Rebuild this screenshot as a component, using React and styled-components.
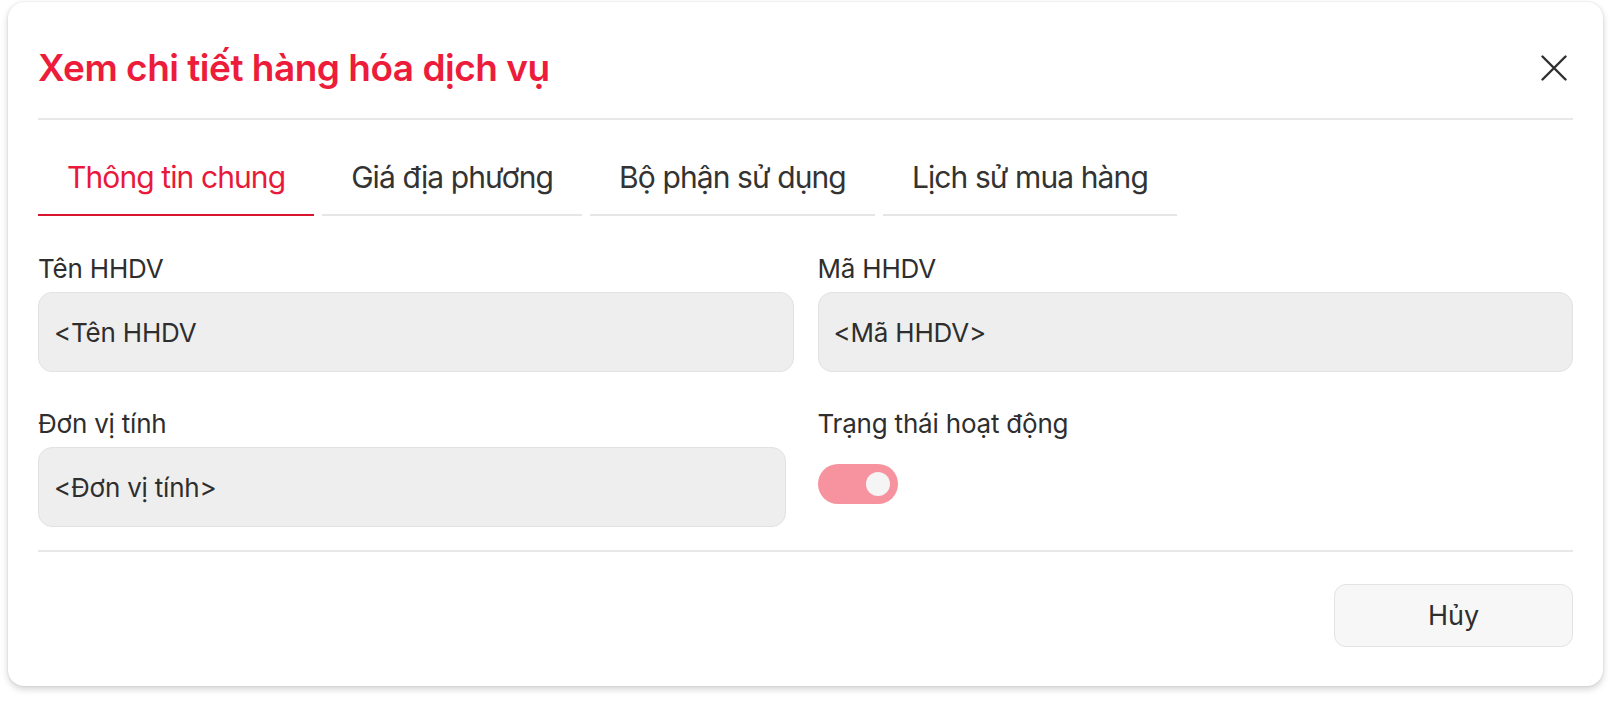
import React, { useState } from "react";
import styled, { createGlobalStyle } from "styled-components";

const GlobalStyle = createGlobalStyle`
  html, body {
    margin: 0;
    padding: 0;
    background: #ffffff;
  }
  body {
    font-family: Inter, "Noto Sans", "Liberation Sans", sans-serif;
    color: #333333;
  }
  * { box-sizing: border-box; }
`;

const Page = styled.div`
  padding: 2px 9px 16px 8px;
`;

const Card = styled.div`
  background: #ffffff;
  border-radius: 16px;
  box-shadow: 0 3px 7px rgba(0, 0, 0, 0.18), 0 0 2px rgba(0, 0, 0, 0.12);
  padding: 0 30px 39px;
  height: 684px;
  display: flex;
  flex-direction: column;
`;

const Header = styled.div`
  display: flex;
  align-items: center;
  justify-content: space-between;
  padding: 44px 0 28px;
  border-bottom: 2px solid #e8e8e8;
`;

const Title = styled.h1`
  margin: 0;
  font-size: 37px;
  line-height: 44px;
  font-weight: 600;
  color: #ec1c3a;
  letter-spacing: -0.5px;
`;

const CloseButton = styled.button`
  width: 38px;
  height: 38px;
  display: flex;
  align-items: center;
  justify-content: center;
  border: none;
  background: transparent;
  padding: 0;
  cursor: pointer;
  color: #2f2f2f;
`;

const TabBar = styled.div`
  display: flex;
  gap: 8px;
  margin-top: 20px;
`;

const Tab = styled.button`
  border: none;
  background: transparent;
  padding: 19px 29px;
  font-family: inherit;
  font-size: 30px;
  line-height: 36px;
  font-weight: 400;
  letter-spacing: -0.9px;
  color: ${(p) => (p.$active ? "#e8193a" : "#333333")};
  border-bottom: 2px solid ${(p) => (p.$active ? "#d9162f" : "#e6e6e6")};
  cursor: pointer;
  white-space: nowrap;
`;

const Form = styled.div`
  display: grid;
  grid-template-columns: 1fr 1fr;
  column-gap: 24px;
  row-gap: 37px;
  margin-top: 38px;
`;

const Field = styled.div`
  display: flex;
  flex-direction: column;
  gap: 8px;
  margin-right: ${(p) => (p.$inset ? "8px" : "0")};
`;

const Label = styled.label`
  font-size: 26px;
  line-height: 30px;
  letter-spacing: -0.2px;
  color: #2e2e2e;
`;

const Input = styled.div`
  height: 80px;
  display: flex;
  align-items: center;
  padding: 0 15px;
  background: #eeeeee;
  border: 1.5px solid #e2e2e2;
  border-radius: 14px;
  font-size: 26px;
  letter-spacing: -0.2px;
  color: #2e2e2e;
`;

const Toggle = styled.button`
  margin-top: 17px;
  width: 80px;
  height: 40px;
  border-radius: 20px;
  border: none;
  padding: 0 8px;
  display: flex;
  align-items: center;
  justify-content: ${(p) => (p.$on ? "flex-end" : "flex-start")};
  background: ${(p) => (p.$on ? "#f6939f" : "#d6d6d6")};
  cursor: pointer;
`;

const Knob = styled.span`
  width: 24px;
  height: 24px;
  border-radius: 50%;
  background: #f5f5f5;
`;

const Footer = styled.div`
  margin-top: auto;
  border-top: 2px solid #e8e8e8;
  padding-top: 32px;
  display: flex;
  justify-content: flex-end;
`;

const CancelButton = styled.button`
  width: 239px;
  height: 63px;
  border-radius: 12px;
  border: 1.5px solid #e3e3e3;
  background: #f7f7f7;
  font-family: inherit;
  font-size: 27px;
  color: #2e2e2e;
  cursor: pointer;
`;

const tabs = ["Thông tin chung", "Giá địa phương", "Bộ phận sử dụng", "Lịch sử mua hàng"];

export default function App() {
  const [active, setActive] = useState(0);
  const [on, setOn] = useState(true);
  return (
    <>
      <GlobalStyle />
      <Page>
        <Card>
          <Header>
            <Title>Xem chi tiết hàng hóa dịch vụ</Title>
            <CloseButton aria-label="Đóng">
              <svg width="26" height="26" viewBox="0 0 26 26" fill="none">
                <path d="M1.5 1.5L24.5 24.5M24.5 1.5L1.5 24.5" stroke="currentColor" strokeWidth="2.4" strokeLinecap="round" />
              </svg>
            </CloseButton>
          </Header>
          <TabBar>
            {tabs.map((t, i) => (
              <Tab key={t} $active={i === active} onClick={() => setActive(i)}>
                {t}
              </Tab>
            ))}
          </TabBar>
          <Form>
            <Field>
              <Label>Tên HHDV</Label>
              <Input>{"<Tên HHDV"}</Input>
            </Field>
            <Field>
              <Label>Mã HHDV</Label>
              <Input>{"<Mã HHDV>"}</Input>
            </Field>
            <Field $inset>
              <Label>Đơn vị tính</Label>
              <Input>{"<Đơn vị tính>"}</Input>
            </Field>
            <Field>
              <Label>Trạng thái hoạt động</Label>
              <Toggle $on={on} onClick={() => setOn(!on)} aria-label="Trạng thái">
                <Knob />
              </Toggle>
            </Field>
          </Form>
          <Footer>
            <CancelButton>Hủy</CancelButton>
          </Footer>
        </Card>
      </Page>
    </>
  );
}
